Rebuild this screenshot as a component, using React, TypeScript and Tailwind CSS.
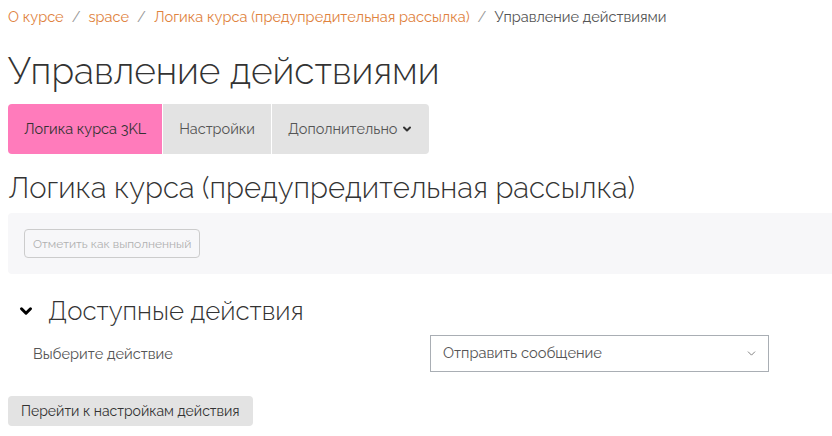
import { ChevronDown } from "lucide-react";

const font = { fontFamily: "Raleway, Lato, 'Liberation Sans', sans-serif" };

export default function App() {
  return (
    <div className="min-h-screen bg-white px-2 text-[#333]" style={font}>
      {/* breadcrumbs */}
      <nav className="flex items-center pt-[7px] text-[14.6px] leading-5">
        <a className="text-[#e0823d]">О курсе</a>
        <span className="px-[8px] text-[#999]">/</span>
        <a className="text-[#e0823d]">space</a>
        <span className="px-[8px] text-[#999]">/</span>
        <a className="text-[#e0823d]">Логика курса (предупредительная рассылка)</a>
        <span className="px-[8px] text-[#999]">/</span>
        <span className="text-[#555]">Управление действиями</span>
      </nav>

      <h1 className="mt-[22px] text-[37px] font-light leading-[44px] text-[#333]">Управление действиями</h1>

      {/* tabs */}
      <div className="mt-[11px] flex h-[50px] w-fit overflow-hidden rounded text-[14.5px]">
        <div className="flex items-center bg-[#ff7bbb] px-[16px] text-[#333]">Логика курса 3KL</div>
        <div className="flex items-center border-l border-white bg-[#e3e3e3] px-[16px] text-[#555]">Настройки</div>
        <div className="flex items-center gap-1 border-l border-white bg-[#e3e3e3] px-[16px] text-[#555]">
          Дополнительно
          <ChevronDown size={12} strokeWidth={4} className="text-[#333]" />
        </div>
      </div>

      <h2 className="mt-[15px] text-[29.3px] font-light leading-[38px] text-[#333]">
        Логика курса (предупредительная рассылка)
      </h2>

      <div className="-mr-2 mt-[6px] flex h-[61px] items-center rounded-l bg-[#f7f7f9] px-4">
        <button className="h-[29px] rounded border border-[#ccc] px-2 text-[12px] text-[#b0b0b0]">
          Отметить как выполненный
        </button>
      </div>

      <div className="mt-[19px] flex items-center gap-[13px] pl-[9px]">
        <ChevronDown size={18} strokeWidth={4} className="text-black" />
        <h3 className="text-[25.8px] font-light leading-[36px] text-[#333]">Доступные действия</h3>
      </div>

      <div className="mt-[6px] flex items-center">
        <label className="w-[422px] pl-[25px] text-[14.6px] text-[#555]">Выберите действие</label>
        <div className="flex h-[37px] w-[339px] items-center justify-between border border-[#a9aeb4] pl-[12px] pr-[10px] text-[14.7px] text-[#555]">
          Отправить сообщение
          <ChevronDown size={13} strokeWidth={1.5} className="text-[#666]" />
        </div>
      </div>

      <button className="mt-[24px] h-[30px] rounded bg-[#e3e3e3] px-[13px] text-[14px] text-[#333]">
        Перейти к настройкам действия
      </button>
    </div>
  );
}
